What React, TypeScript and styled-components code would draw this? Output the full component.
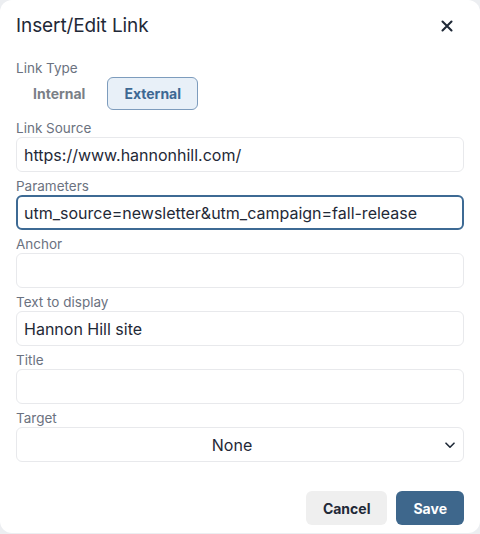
import React, { useState } from 'react';
import styled, { createGlobalStyle } from 'styled-components';

const GlobalStyle = createGlobalStyle`
  html, body {
    margin: 0;
    padding: 0;
    background: #eceef1;
  }
  * {
    box-sizing: border-box;
  }
`;

const Dialog = styled.div`
  width: 480px;
  height: 533px;
  background: #ffffff;
  border-radius: 12px;
  font-family: Inter, 'Noto Sans', sans-serif;
  color: #1f2937;
  display: flex;
  flex-direction: column;
  overflow: hidden;
`;

const Header = styled.header`
  display: flex;
  justify-content: space-between;
  align-items: center;
  padding: 14px 16px 0 16px;
  height: 38px;
  margin-bottom: 21px;
`;

const Title = styled.h1`
  margin: 0;
  font-size: 19px;
  font-weight: 400;
  line-height: 24px;
  letter-spacing: -0.1px;
  color: #1f2937;
`;

const CloseButton = styled.button`
  width: 24px;
  height: 24px;
  margin-right: 5px;
  padding: 0;
  border: none;
  background: transparent;
  display: flex;
  align-items: center;
  justify-content: center;
  cursor: pointer;
  color: #1f2937;
`;

const Body = styled.div`
  padding: 0 16px;
  display: flex;
  flex-direction: column;
  gap: 5px;
`;

const Field = styled.div`
  display: flex;
  flex-direction: column;
`;

const Label = styled.label`
  font-size: 13.5px;
  line-height: 18px;
  color: #6b7280;
`;

const ToggleGroup = styled.div`
  display: flex;
  gap: 5px;
  margin-bottom: 4px;
`;

const ToggleButton = styled.button<{ $active?: boolean }>`
  height: 33px;
  padding: 0 16px;
  border-radius: 6px;
  font-family: inherit;
  font-size: 14px;
  font-weight: 700;
  cursor: pointer;
  border: 1px solid ${(p) => (p.$active ? '#7d9cbd' : 'transparent')};
  background: ${(p) => (p.$active ? '#e8f0f8' : 'transparent')};
  color: ${(p) => (p.$active ? '#3d6893' : '#7a7f87')};
`;

const TextInput = styled.input<{ $focused?: boolean }>`
  height: 35px;
  width: 100%;
  border-radius: 6px;
  border: ${(p) => (p.$focused ? '2px solid #3d6a94' : '1px solid #e8e9ec')};
  padding: 0 ${(p) => (p.$focused ? '6px' : '7px')};
  font-family: inherit;
  font-size: 16px;
  color: #1f2937;
  background: #fff;
  outline: none;
`;

const SelectWrap = styled.div`
  position: relative;
  height: 35px;
`;

const Select = styled.select`
  appearance: none;
  width: 100%;
  height: 35px;
  border-radius: 6px;
  border: 1px solid #e8e9ec;
  background: #fff;
  font-family: inherit;
  font-size: 16px;
  color: #1f2937;
  text-align: center;
  text-align-last: center;
  padding: 1px 36px 0 20px;
  outline: none;
`;

const Chevron = styled.svg`
  position: absolute;
  right: 9px;
  top: 15px;
  pointer-events: none;
`;

const Footer = styled.footer`
  display: flex;
  justify-content: flex-end;
  gap: 9px;
  padding: 29px 16px 0 16px;
`;

const ActionButton = styled.button<{ $primary?: boolean }>`
  height: 34px;
  padding: 0 17px;
  border: none;
  border-radius: 6px;
  font-family: inherit;
  font-size: 14px;
  font-weight: 700;
  cursor: pointer;
  background: ${(p) => (p.$primary ? '#3e678c' : '#efefef')};
  color: ${(p) => (p.$primary ? '#ffffff' : '#1f2937')};
`;

const fields = [
  { label: 'Link Source', value: 'https://www.hannonhill.com/' },
  { label: 'Parameters', value: 'utm_source=newsletter&utm_campaign=fall-release', focused: true },
  { label: 'Anchor', value: '' },
  { label: 'Text to display', value: 'Hannon Hill site' },
  { label: 'Title', value: '' },
];

export default function App() {
  const [linkType, setLinkType] = useState<'internal' | 'external'>('external');
  const [values, setValues] = useState(fields.map((f) => f.value));

  return (
    <>
      <GlobalStyle />
      <Dialog>
        <Header>
          <Title>Insert/Edit Link</Title>
          <CloseButton aria-label="Close">
            <svg width="12" height="12" viewBox="0 0 12 12">
              <path d="M1.5 1.5 L10.5 10.5 M10.5 1.5 L1.5 10.5" stroke="currentColor" strokeWidth="2.1" strokeLinecap="round" />
            </svg>
          </CloseButton>
        </Header>
        <Body>
          <Field>
            <Label>Link Type</Label>
            <ToggleGroup>
              <ToggleButton $active={linkType === 'internal'} onClick={() => setLinkType('internal')}>
                Internal
              </ToggleButton>
              <ToggleButton $active={linkType === 'external'} onClick={() => setLinkType('external')}>
                External
              </ToggleButton>
            </ToggleGroup>
          </Field>
          {fields.map((f, i) => (
            <Field key={f.label}>
              <Label>{f.label}</Label>
              <TextInput
                $focused={f.focused}
                value={values[i]}
                onChange={(e) => {
                  const next = [...values];
                  next[i] = e.target.value;
                  setValues(next);
                }}
              />
            </Field>
          ))}
          <Field>
            <Label>Target</Label>
            <SelectWrap>
              <Select defaultValue="none">
                <option value="none">None</option>
                <option value="_blank">New window</option>
              </Select>
              <Chevron width="10" height="7" viewBox="0 0 10 7">
                <path d="M1 1.2 L5 5.2 L9 1.2" fill="none" stroke="#1f2937" strokeWidth="1.6" strokeLinecap="round" strokeLinejoin="round" />
              </Chevron>
            </SelectWrap>
          </Field>
        </Body>
        <Footer>
          <ActionButton>Cancel</ActionButton>
          <ActionButton $primary>Save</ActionButton>
        </Footer>
      </Dialog>
    </>
  );
}
